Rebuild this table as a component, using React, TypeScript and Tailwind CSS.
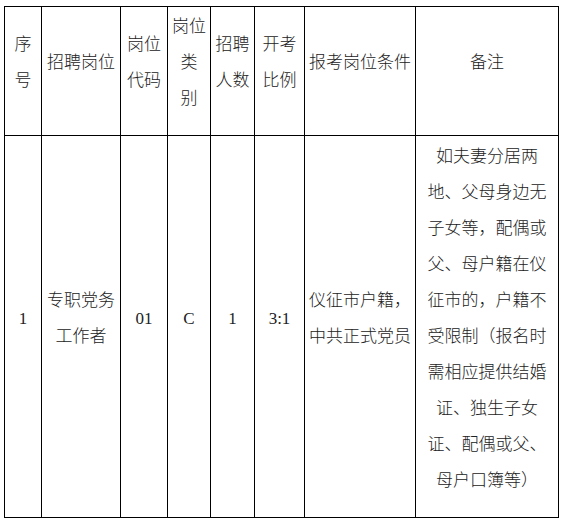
const headers: { lines: string[]; w: string }[] = [
  { lines: ["序", "号"], w: "w-[37px]" },
  { lines: ["招聘岗位"], w: "w-[79px]" },
  { lines: ["岗位", "代码"], w: "w-[47px]" },
  { lines: ["岗位", "类", "别"], w: "w-[43px]" },
  { lines: ["招聘", "人数"], w: "w-[44px]" },
  { lines: ["开考", "比例"], w: "w-[50px]" },
  { lines: ["报考岗位条件"], w: "w-[111px]" },
  { lines: ["备注"], w: "w-[143px]" },
]

const row: string[][] = [
  ["1"],
  ["专职党务", "工作者"],
  ["01"],
  ["C"],
  ["1"],
  ["3:1"],
  ["仪征市户籍，", "中共正式党员"],
  [
    "如夫妻分居两",
    "地、父母身边无",
    "子女等，配偶或",
    "父、母户籍在仪",
    "征市的，户籍不",
    "受限制（报名时",
    "需相应提供结婚",
    "证、独生子女",
    "证、配偶或父、",
    "母户口簿等）",
  ],
]

function Lines({ lines }: { lines: string[] }) {
  return (
    <>
      {lines.map((l, i) => (
        <div key={i} className="whitespace-nowrap">
          {l}
        </div>
      ))}
    </>
  )
}

export default function App() {
  return (
    <div className="min-h-[524px] w-[566px] bg-white pl-[4px] pt-[6px] text-[#222] [font-family:'Liberation_Serif','Noto_Sans_CJK_SC',serif]">
      <table className="table-fixed border-collapse text-[17px] font-light leading-[36px]">
        <colgroup>
          {headers.map((h, i) => (
            <col key={i} className={h.w} />
          ))}
        </colgroup>
        <tbody>
          <tr className="h-[129px]">
            {headers.map((h, i) => (
              <td
                key={i}
                className="border border-black p-0 pb-[17px] text-center align-middle"
              >
                <Lines lines={h.lines} />
              </td>
            ))}
          </tr>
          <tr className="h-[382px]">
            {row.map((c, i) => (
              <td
                key={i}
                className="border border-black p-0 pb-[16px] text-center align-middle"
              >
                <Lines lines={c} />
              </td>
            ))}
          </tr>
        </tbody>
      </table>
    </div>
  )
}
